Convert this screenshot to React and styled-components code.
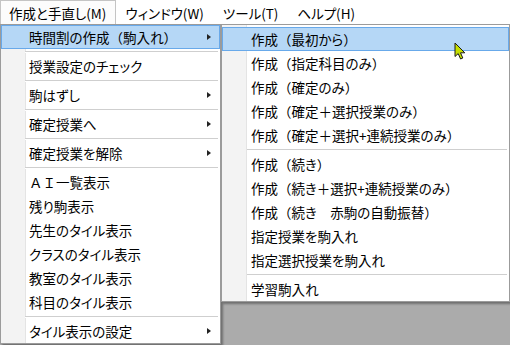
import React from "react";
import styled, { createGlobalStyle } from "styled-components";

const GlobalStyle = createGlobalStyle`
  html, body {
    margin: 0;
    padding: 0;
  }
  body {
    background: #ababab;
    font-family: "Noto Sans CJK JP", "Noto Sans", sans-serif;
  }
`;

const Screen = styled.div`
  position: relative;
  width: 510px;
  height: 345px;
  overflow: hidden;
  background: #ababab;
  color: #000;
  font-size: 13.5px;
`;

const MenuBar = styled.div`
  display: flex;
  height: 24px;
  background: #fff;
  font-feature-settings: "palt";
`;

const BarItem = styled.div`
  display: flex;
  align-items: center;
  box-sizing: border-box;
  height: 24px;
  padding: 0 9px 0 8px;
  border: 1px solid ${(p) => (p.$open ? "#c4c4c4" : "transparent")};
  border-bottom: none;
  background: ${(p) => (p.$open ? "#fcfcfc" : "transparent")};
`;

const Panels = styled.div`
  display: flex;
  align-items: flex-start;
`;

const Popup = styled.div`
  box-sizing: border-box;
  width: ${(p) => p.$width}px;
  padding: ${(p) => p.$padY}px 0 0;
  border: 1px solid #9b9b9b;
  background: linear-gradient(
    to right,
    #f3f3f3 0,
    #f3f3f3 ${(p) => p.$gutter}px,
    #e4e4e4 ${(p) => p.$gutter}px,
    #e4e4e4 ${(p) => p.$gutter + 1}px,
    #fff ${(p) => p.$gutter + 1}px
  );
  box-shadow: 2px 2px 2px rgba(0, 0, 0, 0.35);
`;

const Item = styled.div`
  display: flex;
  align-items: center;
  justify-content: space-between;
  box-sizing: border-box;
  height: 24px;
  padding: 0 8px 0 ${(p) => p.$indent}px;
  border: 1px solid ${(p) => (p.$hot ? "#68a9ea" : "transparent")};
  background: ${(p) => (p.$hot ? "#b5d7f6" : "transparent")};
  white-space: nowrap;
`;

// kana set proportionally (like Meiryo UI), full-width brackets kept wide
const LabelText = styled.span`
  font-feature-settings: "palt";
`;

const Wide = styled.span`
  font-feature-settings: normal;
`;

const Arrow = styled.span`
  width: 0;
  height: 0;
  border-left: 4px solid #222;
  border-top: 3.5px solid transparent;
  border-bottom: 3.5px solid transparent;
`;

const Separator = styled.div`
  height: 1px;
  margin: 2px 2px 1px ${(p) => p.$indent}px;
  background: #cfcfcf;
  border-bottom: 1px solid #fff;
`;

const Cursor = styled.svg`
  position: absolute;
  left: 454px;
  top: 42px;
`;

const mainMenu = [
  { label: "時間割の作成（駒入れ）", sub: true, hot: true },
  "-",
  { label: "授業設定のチェック" },
  "-",
  { label: "駒はずし", sub: true },
  "-",
  { label: "確定授業へ", sub: true },
  "-",
  { label: "確定授業を解除", sub: true },
  "-",
  { label: "ＡＩ一覧表示" },
  { label: "残り駒表示" },
  { label: "先生のタイル表示" },
  { label: "クラスのタイル表示" },
  { label: "教室のタイル表示" },
  { label: "科目のタイル表示" },
  "-",
  { label: "タイル表示の設定", sub: true },
];

const subMenu = [
  { label: "作成（最初から）", hot: true },
  { label: "作成（指定科目のみ）" },
  { label: "作成（確定のみ）" },
  { label: "作成（確定＋選択授業のみ）" },
  { label: "作成（確定＋選択+連続授業のみ）" },
  "-",
  { label: "作成（続き）" },
  { label: "作成（続き＋選択+連続授業のみ）" },
  { label: "作成（続き　赤駒の自動振替）" },
  { label: "指定授業を駒入れ" },
  { label: "指定選択授業を駒入れ" },
  "-",
  { label: "学習駒入れ" },
];

const Label = ({ text }) => (
  <LabelText>
    {text
      .split(/([（）＋　Ａ-Ｚ]+)/)
      .map((part, i) => (i % 2 ? <Wide key={i}>{part}</Wide> : part))}
  </LabelText>
);

const Menu = ({ items, width, padY, gutter, indent, sepIndent }) => (
  <Popup $width={width} $padY={padY} $gutter={gutter}>
    {items.map((it, i) =>
      it === "-" ? (
        <Separator key={i} $indent={sepIndent} />
      ) : (
        <Item key={i} $hot={it.hot} $indent={indent}>
          <Label text={it.label} />
          {it.sub && <Arrow />}
        </Item>
      )
    )}
  </Popup>
);

export default function App() {
  return (
    <Screen>
      <GlobalStyle />
      <MenuBar>
        <BarItem $open>作成と手直し(M)</BarItem>
        <BarItem>ウィンドウ(W)</BarItem>
        <BarItem>ツール(T)</BarItem>
        <BarItem>ヘルプ(H)</BarItem>
      </MenuBar>
      <Panels>
        <Menu
          items={mainMenu}
          width={221}
          padY={0}
          gutter={24}
          indent={27}
          sepIndent={24}
        />
        <Menu
          items={subMenu}
          width={289}
          padY={2}
          gutter={24}
          indent={28}
          sepIndent={25}
        />
      </Panels>
      <Cursor width="13" height="18" viewBox="0 0 13 18">
        <path
          d="M1 1 L1 14.5 L4.2 11.6 L6.6 17 L8.8 16 L6.5 10.8 L10.8 10.8 Z"
          fill="#c6e000"
          stroke="#1a1a1a"
          strokeWidth="1"
          strokeLinejoin="round"
        />
      </Cursor>
    </Screen>
  );
}
